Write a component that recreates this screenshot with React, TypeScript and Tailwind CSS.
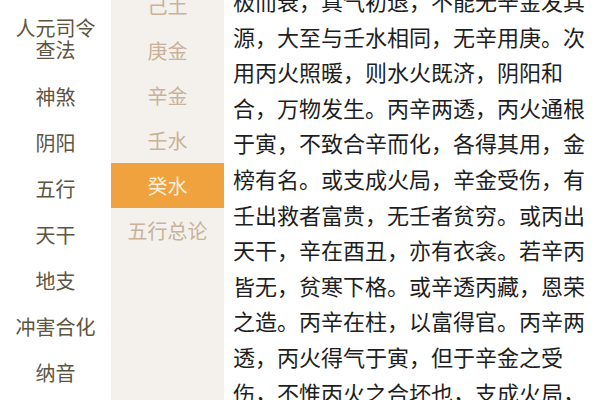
const FONT = { fontFamily: '"Noto Sans CJK SC", "Noto Sans", sans-serif' };

const LEFT_ITEMS = ["神煞", "阴阳", "五行", "天干", "地支", "冲害合化", "纳音"];

const MIDDLE_ITEMS = ["己土", "庚金", "辛金", "壬水", "癸水", "五行总论"];
const SELECTED = "癸水";

const LINES = [
  "极而衰，真气初退，不能无辛金发其",
  "源，大至与壬水相同，无辛用庚。次",
  "用丙火照暖，则水火既济，阴阳和",
  "合，万物发生。丙辛两透，丙火通根",
  "于寅，不致合辛而化，各得其用，金",
  "榜有名。或支成火局，辛金受伤，有",
  "壬出救者富贵，无壬者贫穷。或丙出",
  "天干，辛在酉丑，亦有衣衾。若辛丙",
  "皆无，贫寒下格。或辛透丙藏，恩荣",
  "之造。丙辛在柱，以富得官。丙辛两",
  "透，丙火得气于寅，但于辛金之受",
  "伤，不惟丙火之合坏也，支成火局，",
];

export default function App() {
  return (
    <div className="flex h-[400px] w-[600px] overflow-hidden bg-white" style={FONT}>
      {/* category column */}
      <div className="w-[111px] shrink-0 bg-white text-[20px] text-[#5d5441]">
        <div className="flex flex-col items-center pt-[17px] pb-[13px] leading-[22px]">
          <span>人元司令</span>
          <span>查法</span>
        </div>
        {LEFT_ITEMS.map((item) => (
          <div key={item} className="flex h-[46px] items-center justify-center">
            {item}
          </div>
        ))}
      </div>

      {/* sub-menu column */}
      <div className="w-[113px] shrink-0 bg-[#f4f1ec] text-[20px] text-[#c8b29a]">
        <div className="mt-[-17px]">
          {MIDDLE_ITEMS.map((item) =>
            item === SELECTED ? (
              <div
                key={item}
                className="flex h-[45px] items-center justify-center bg-[#f0a23f] text-[#fdf1dc]"
              >
                {item}
              </div>
            ) : (
              <div key={item} className="flex h-[45px] items-center justify-center">
                {item}
              </div>
            )
          )}
        </div>
      </div>

      {/* article text */}
      <div className="flex-1 pl-[9px] pr-[14px] text-[22px] leading-[35.6px] text-[#1e1e1e]">
        <div className="mt-[-17px]">
          {LINES.map((line, i) => (
            <p key={i} className="whitespace-nowrap">
              {line}
            </p>
          ))}
        </div>
      </div>
    </div>
  );
}
